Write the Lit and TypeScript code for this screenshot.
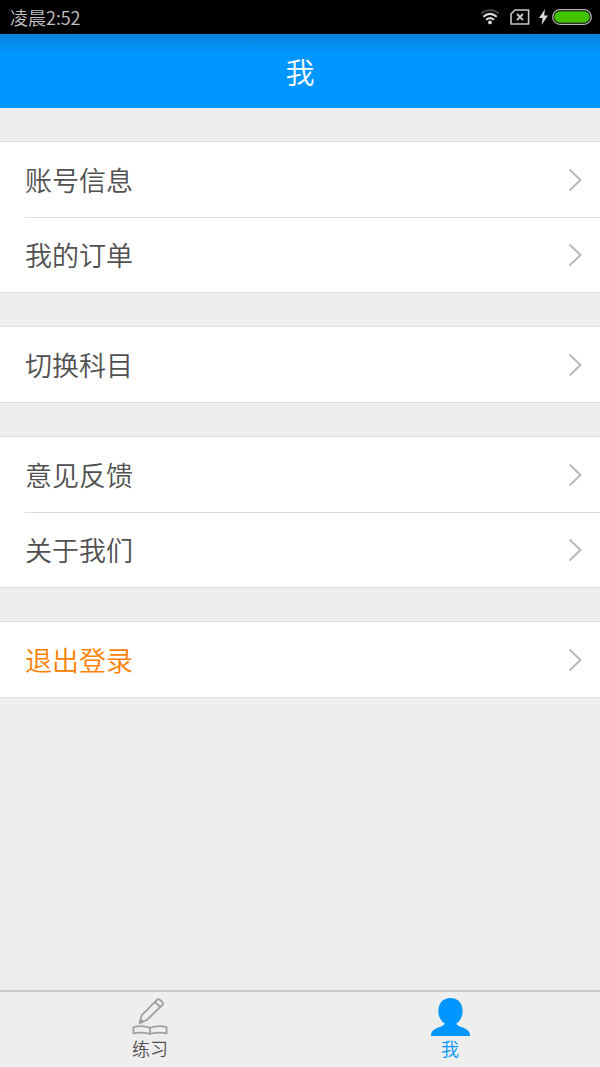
import { LitElement, html, css, svg } from "lit";
import { customElement, property, state } from "lit/decorators.js";
import { classMap } from "lit/directives/class-map.js";

interface MenuItem {
  label: string;
  accent?: boolean;
}

const GROUPS: MenuItem[][] = [
  [{ label: "账号信息" }, { label: "我的订单" }],
  [{ label: "切换科目" }],
  [{ label: "意见反馈" }, { label: "关于我们" }],
  [{ label: "退出登录", accent: true }],
];

@customElement("status-bar")
class StatusBar extends LitElement {
  static styles = css`
    :host {
      display: flex;
      align-items: center;
      justify-content: space-between;
      height: 34px;
      padding: 0 8px 0 10px;
      box-sizing: border-box;
      background: #000;
      color: #c4c4c4;
      font-size: 18px;
      line-height: 20px;
    }
    .icons {
      display: flex;
      align-items: center;
    }
    .wifi {
      margin-right: 10px;
    }
    .sim {
      margin-right: 9px;
    }
    .bolt {
      margin-right: 4px;
    }
    svg {
      display: block;
    }
  `;

  render() {
    return html`
      <span>凌晨2:52</span>
      <div class="icons">
        <svg class="wifi" width="20" height="16" viewBox="0 0 20 16" fill="none" stroke-width="2">
          <path d="M1 4.6Q10-2.4 19 4.6" stroke="#3c3c3c" />
          <path d="M3.2 7.8Q10 2 16.8 7.8" stroke="#d8d8d8" />
          <path d="M6 10.8Q10 7.4 14 10.8" stroke="#d8d8d8" />
          <circle cx="10" cy="13.4" r="1.9" fill="#d8d8d8" />
        </svg>
        <svg class="sim" width="20" height="16" viewBox="0 0 20 16" fill="none" stroke="#c8c8c8">
          <path d="M5 1H18.6V15H1V5Z" stroke-width="1.6" stroke-linejoin="round" />
          <path d="M7 5L13 11M13 5L7 11" stroke-width="1.8" />
        </svg>
        <svg class="bolt" width="9" height="16" viewBox="0 0 9 16" fill="#d8d8d8">
          <path d="M6 0L0 9H3.6L2.6 16L9 6.4H5.2Z" />
        </svg>
        <svg width="40" height="16" viewBox="0 0 40 16">
          <rect x="0.7" y="0.7" width="38.6" height="14.6" rx="7.3" fill="#000" stroke="#b4b8b0" stroke-width="1.3" />
          <rect x="2.2" y="2.2" width="35.6" height="11.6" rx="5.8" fill="#43c200" />
        </svg>
      </div>
    `;
  }
}

@customElement("menu-group")
class MenuGroup extends LitElement {
  @property({ attribute: false }) items: MenuItem[] = [];

  static styles = css`
    :host {
      display: block;
      background: #fff;
      border-top: 1px solid #dcdcdc;
      border-bottom: 1px solid #dcdcdc;
    }
    .row {
      display: flex;
      align-items: center;
      justify-content: space-between;
      position: relative;
      width: 100%;
      height: 75px;
      padding: 0 18px 0 25px;
      border: 0;
      background: none;
      color: #505050;
      font: inherit;
      font-size: 27px;
      line-height: 40px;
      text-align: left;
      cursor: pointer;
    }
    .row + .row::before {
      content: "";
      position: absolute;
      top: 0;
      left: 25px;
      right: 0;
      border-top: 1px solid #dcdcdc;
    }
    .accent {
      color: #ff8000;
    }
    svg {
      display: block;
    }
  `;

  render() {
    return this.items.map(
      (item) => html`
        <button type="button" class=${classMap({ row: true, accent: !!item.accent })}>
          <span>${item.label}</span>
          <svg width="14" height="24" viewBox="0 0 14 24" fill="none" stroke="#b8b8b8" stroke-width="2">
            <path d="M1.5 1.5L12.5 12L1.5 22.5" />
          </svg>
        </button>
      `
    );
  }
}

const practiceIcon = svg`
  <g fill="none" stroke="#a0a0a0" stroke-width="1.8" stroke-linejoin="round">
    <path d="M7.6 25L9.8 17.2L25 1.8Q26.4.6 28 1.8L30.4 4Q31.6 5.4 30.4 7L14.8 22Z" />
    <path d="M22.8 4L28.4 9" />
    <path d="M7.6 25L8.6 21.4L11.2 23.8Z" fill="#a0a0a0" />
    <path d="M1.4 29.2Q10 26.8 18 29.8Q26 26.8 34.6 29.2V35.4Q26 33.6 18 36Q10 33.6 1.4 35.4ZM18 29.8V36" />
  </g>
`;

const profileIcon = svg`
  <path
    fill="#0096ff"
    d="M19.5 0C27 0 31.6 5.2 31.6 13C31.6 18.6 29.2 23 25.2 25.8C27 29.6 38 29.4 39 36.4V38H0V36.4C1 29.4 12 29.6 13.8 25.8C9.8 23 7.4 18.6 7.4 13C7.4 5.2 12 0 19.5 0Z"
  />
`;

@customElement("app-root")
class AppRoot extends LitElement {
  @state() private tab = "me";

  static styles = css`
    :host {
      display: flex;
      flex-direction: column;
      min-height: 100vh;
      background: #eee;
      font-family: "Noto Sans CJK SC", "Noto Sans", sans-serif;
      font-weight: 350;
    }
    header {
      display: flex;
      align-items: center;
      justify-content: center;
      height: 74px;
      background: linear-gradient(#0884dc, #0096ff 20px);
    }
    h1 {
      margin: 0;
      color: #fff;
      font-size: 29px;
      line-height: 40px;
      font-weight: inherit;
    }
    main {
      display: flex;
      flex-direction: column;
      flex: 1;
      gap: 33px;
      padding: 33px 0;
    }
    nav {
      display: flex;
      border-top: 2px solid #c8c8c8;
    }
    .tab {
      display: flex;
      flex: 1;
      flex-direction: column;
      align-items: center;
      height: 75px;
      padding: 6px 0 0;
      border: 0;
      background: none;
      color: #505050;
      font: inherit;
      font-size: 18px;
      line-height: 24px;
      cursor: pointer;
    }
    .active {
      color: #0096ff;
    }
    svg {
      display: block;
    }
  `;

  render() {
    return html`
      <status-bar></status-bar>
      <header><h1>我</h1></header>
      <main>${GROUPS.map((items) => html`<menu-group .items=${items}></menu-group>`)}</main>
      <nav>
        <button
          type="button"
          class=${classMap({ tab: true, active: this.tab === "practice" })}
          @click=${() => (this.tab = "practice")}
        >
          <svg width="36" height="38" viewBox="0 0 36 38">${practiceIcon}</svg>
          <span>练习</span>
        </button>
        <button
          type="button"
          class=${classMap({ tab: true, active: this.tab === "me" })}
          @click=${() => (this.tab = "me")}
        >
          <svg width="39" height="38" viewBox="0 0 39 38">${profileIcon}</svg>
          <span>我</span>
        </button>
      </nav>
    `;
  }
}
